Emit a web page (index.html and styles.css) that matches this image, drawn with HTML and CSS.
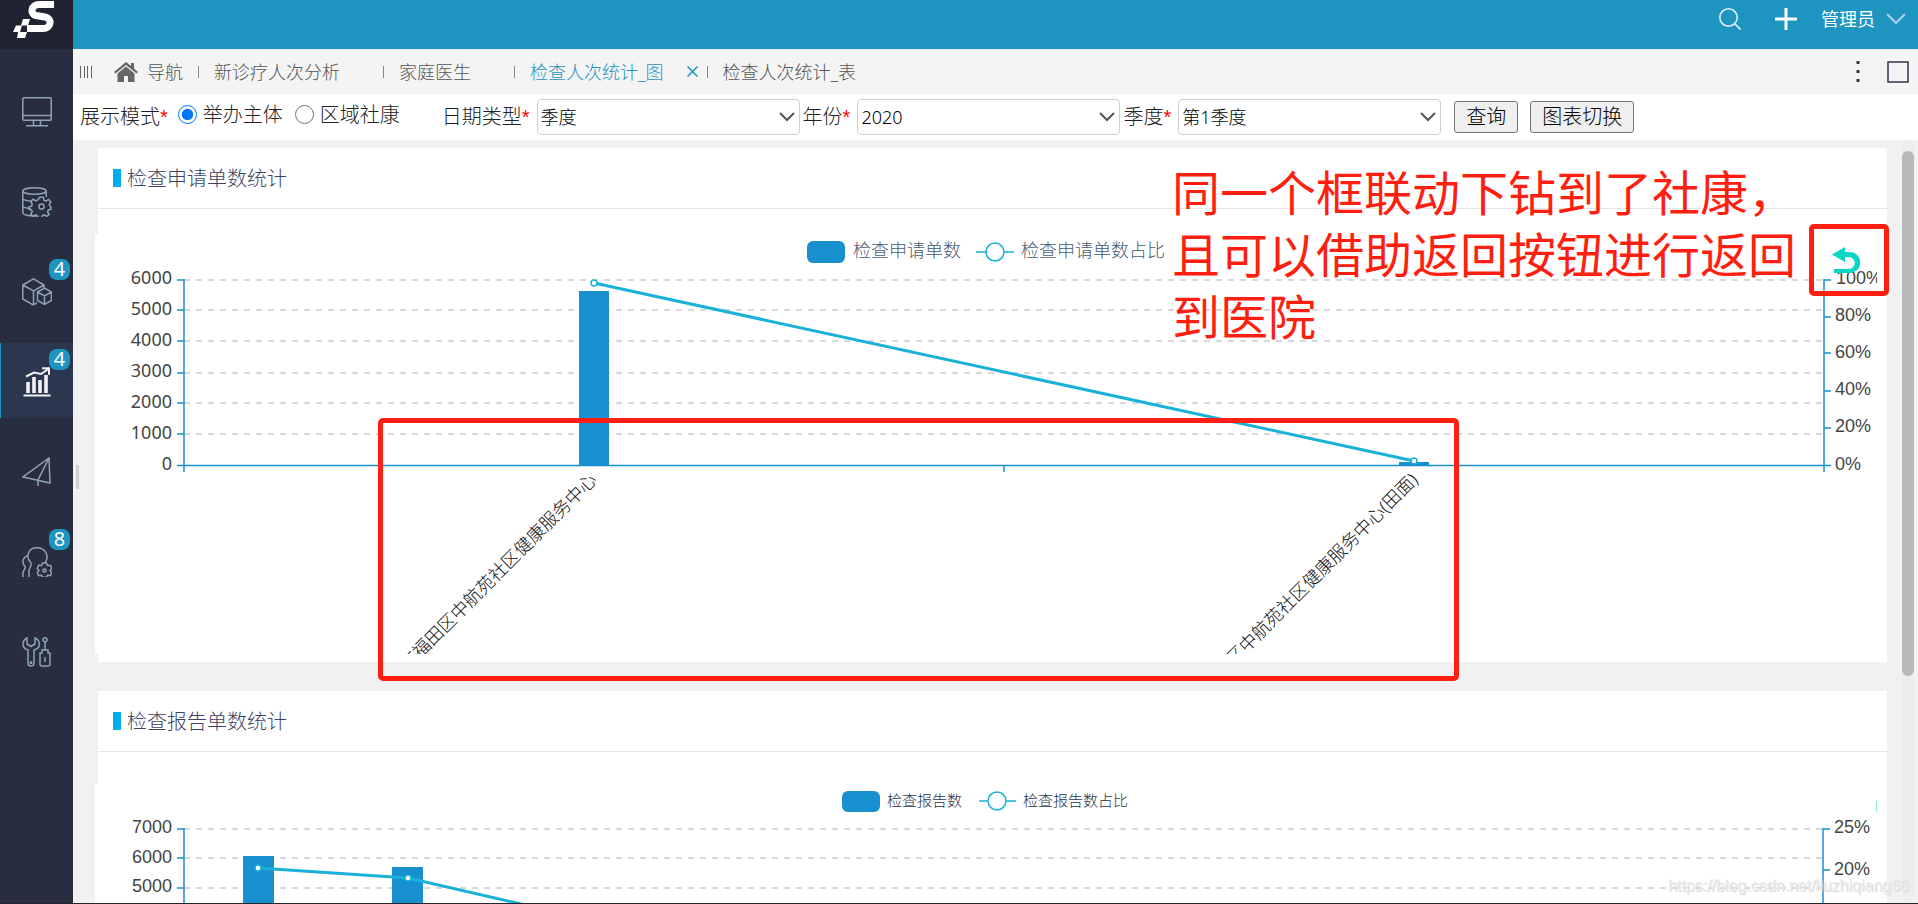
FILE: index.html
```html
<!DOCTYPE html>
<html lang="zh-CN">
<head>
<meta charset="utf-8">
<title>检查人次统计_图</title>
<link rel="stylesheet" href="styles.css">
</head>
<body>
<div class="app">
  <aside class="sidebar">
    <a class="logo" href="#" aria-label="首页">
      <svg width="73" height="49" viewBox="0 0 73 49">
        <path d="M54 4.500H39C31 4.500 29.500 14 36 15.500L45 17C53 18.500 51 28.500 43 28.500H27" fill="none" stroke="#fff" stroke-width="7"/>
        <path d="M23 19h7l-2 6.500h-7zM16 25.500h6l-2 6.500h-7zM21 32h6l-2 6h-8l1-6z" fill="#fff"/>
      </svg>
    </a>
    <nav class="menu">
      <a class="menu-item" href="#" aria-label="工作台">
        <svg class="menu-icon" viewBox="0 0 30 30"><rect x=".8" y=".8" width="28.400" height="22.400" rx="1"/><path d="M1 18.500h28M11.500 23.500v5M18.500 23.500v5M4 28.700h22"/></svg>
      </a>
      <a class="menu-item" href="#" aria-label="数据管理">
        <svg class="menu-icon" viewBox="0 0 30 30"><ellipse cx="12.500" cy="4" rx="11.700" ry="3.200"/><path d="M.8 4v21.500c0 2 5 3.500 14 3.500M24.200 4v6M.8 12c2 1.500 5 2 9 2.300M.8 19.500c2 1.500 4.500 1.800 8 2"/><path d="M17.900 10.200h3.400l.6 3 2 .9 2.600-1.700 2.300 2.400-1.600 2.500.8 2 .9.600v2.400l-2.500.6-.9 2 1.600 2.500-2.300 2-2.600-1.500-2 .8-.6 2h-3.400l-.6-2-2-.8-2.500 1.500-2.400-2.300 1.600-2.500-.8-1.700-2.400-.6v-2.400l2.400-.8.8-2-1.600-2.500 2.400-2.400 2.500 1.600 2-.8z"/><circle cx="19.500" cy="19.500" r="2.600"/></svg>
      </a>
      <a class="menu-item" href="#" aria-label="物资管理">
        <svg class="menu-icon" viewBox="0 0 30 30"><path d="M15 26l-4 2L.8 22V8L11.500 1.800 22 8v3M.8 8l10.700 6L22 8M11.500 14v14M15.500 15l7-4 7 4v8.500l-7 4-7-4zM15.500 15l7 4 7-4M22.500 19v8.500"/></svg>
        <span class="badge">4</span>
      </a>
      <a class="menu-item active" href="#" aria-label="统计分析">
        <svg class="menu-icon" viewBox="0 0 30 30"><path d="M1.500 28.500h27" stroke-width="2"/><path d="M6 15v11M12 10v16M18 13v13M24 8v18" stroke-width="3.600"/><path d="M4 9.500l8-4 7 1.500 8-5.500M20 1.200h7v6.500" stroke-width="2"/></svg>
        <span class="badge">4</span>
      </a>
      <a class="menu-item" href="#" aria-label="消息发送">
        <svg class="menu-icon" viewBox="0 0 30 30"><path d="M27 1L1 20l27 6zM27 1L16 23v6"/></svg>
      </a>
      <a class="menu-item" href="#" aria-label="人员管理">
        <svg class="menu-icon" viewBox="0 0 30 30"><path d="M7 30v-6c0-3 3-5 2-8-6-6-3-15.200 6-15.200s12.500 9 8 15M6 8.500c-6 2-6 8-3 11 1 2-2 4-2 6.500v4"/><path d="M20.500 16h4l1 2.500 3-.3 1.200 3.300-1.700 2 1.700 2-1.200 3-3-.3-1 2h-4l-1-2-3 .3-1.200-3 1.700-2-1.700-2 1.200-3.300 3 .3z"/><circle cx="22.500" cy="23.500" r="1.600"/></svg>
        <span class="badge">8</span>
      </a>
      <a class="menu-item" href="#" aria-label="系统工具">
        <svg class="menu-icon" viewBox="0 0 30 30"><path d="M5 1C-.5 4-.5 11 6 13v13c0 4 6 4 6 0V13c7-2 7-9 1-12v6L9 9.500 5 7z"/><circle cx="9" cy="25.500" r=".8"/><circle cx="23" cy="2.800" r="2"/><path d="M23 5v8M20 13h6v3h2v11q0 2-2 2h-6q-2 0-2-2V16h2zM23 20v5"/></svg>
      </a>
    </nav>
  </aside>

  <div class="main">
    <header class="topbar">
      <button class="icon-btn" aria-label="搜索"><svg width="22" height="22" viewBox="0 0 22 22" fill="none" stroke="#e4f3f9" stroke-width="1.600"><circle cx="9.500" cy="9.500" r="8.700"/><path d="M15.500 15.500l6 6"/></svg></button>
      <button class="icon-btn" aria-label="新增"><svg width="22" height="22" viewBox="0 0 22 22" stroke="#fff" stroke-width="3"><path d="M11 0v22M0 11h22"/></svg></button>
      <button class="user">管理员<svg width="20" height="12" viewBox="0 0 20 12" fill="none" stroke="#a5d2e5" stroke-width="2"><path d="M1 1l9 9 9-9"/></svg></button>
    </header>

    <nav class="tabs">
      <svg class="grip" width="12" height="12" viewBox="0 0 12 12" fill="#666"><path d="M0 0h1v12H0zM4 0h1v12H4zM7 0h1v12H7zM11 0h1v12h-1z"/></svg>
      <a class="tab home" href="#"><svg width="24" height="20" viewBox="0 0 24 20" fill="#666"><path d="M12 0L0 10l1.500 1.500L12 3l10.500 8.500L24 10l-4-3.500V1h-3v3z"/><path d="M12 4.500L3.500 11.500V20H10v-6h4v6h6.500v-8.500z"/></svg>导航</a>
      <a class="tab wide" href="#">新诊疗人次分析</a>
      <a class="tab wide" href="#">家庭医生</a>
      <a class="tab current" href="#">检查人次统计_图<svg class="close" width="11" height="11" viewBox="0 0 11 11" stroke="#1e94c1" stroke-width="1.500"><path d="M.5.500l10 10M10.500.500l-10 10"/></svg></a>
      <a class="tab" href="#">检查人次统计_表</a>
      <div class="tab-tools">
        <button class="icon-btn" aria-label="更多"><svg width="4" height="22" viewBox="0 0 4 22" fill="#33334d"><path d="M.5 0h3v3h-3zM.5 9h3v3h-3zM.5 18h3v3h-3z"/></svg></button>
        <button class="icon-btn" aria-label="全屏"><svg width="22" height="22" viewBox="0 0 22 22" fill="none" stroke="#33334d" stroke-width="1.500"><path d="M1 1h20v20H1z"/></svg></button>
      </div>
    </nav>

    <form class="filters">
      <span class="field-label">展示模式<i>*</i></span>
      <label class="radio"><input type="radio" name="mode" checked>举办主体</label>
      <label class="radio"><input type="radio" name="mode">区域社康</label>
      <label class="field-label first" for="dtype">日期类型<i>*</i></label>
      <span class="select"><select id="dtype"><option>季度</option></select><svg width="16" height="10" viewBox="0 0 16 10"><path d="M1 1l7 7 7-7"/></svg></span>
      <label class="field-label" for="year">年份<i>*</i></label>
      <span class="select"><select id="year"><option>2020</option></select><svg width="16" height="10" viewBox="0 0 16 10"><path d="M1 1l7 7 7-7"/></svg></span>
      <label class="field-label" for="quarter">季度<i>*</i></label>
      <span class="select"><select id="quarter"><option>第1季度</option></select><svg width="16" height="10" viewBox="0 0 16 10"><path d="M1 1l7 7 7-7"/></svg></span>
      <button class="btn" type="button">查询</button>
      <button class="btn" type="button">图表切换</button>
    </form>

    <div class="content">
      <div class="splitter"></div>
      <div class="panels">
        <section class="panel">
          <h2 class="panel-title">检查申请单数统计</h2>
          <div class="chart-box">
            <svg class="chart" viewBox="0 0 1782 420">
              <rect class="bar" x="712" y="7" width="38" height="22" rx="6"/>
              <text class="legend" x="758" y="23">检查申请单数</text>
              <path class="legend-line" d="M881 18h38"/><circle class="legend-dot" cx="900" cy="18" r="9"/>
              <text class="legend" x="926" y="23">检查申请单数占比</text>
              <path class="grid" d="M89 46H1728M89 76H1728M89 107H1728M89 139H1728M89 169H1728M89 200H1728"/>
              <path class="axis" d="M89 45V238M82 46h7M82 76h7M82 107h7M82 139h7M82 169h7M82 200h7M82 231.500H1736M909 231v7M1729 45V238M1729 46h7M1729 83h7M1729 119h7M1729 157h7M1729 194h7"/>
              <g class="ylabel">
                <text x="77" y="50">6000</text><text x="77" y="81">5000</text><text x="77" y="112">4000</text><text x="77" y="143">3000</text><text x="77" y="174">2000</text><text x="77" y="205">1000</text><text x="77" y="236">0</text>
              </g>
              <g class="rlabel">
                <text x="1741" y="50">100%</text><text x="1740" y="87">80%</text><text x="1740" y="124">60%</text><text x="1740" y="161">40%</text><text x="1740" y="198">20%</text><text x="1740" y="236">0%</text>
              </g>
              <rect class="bar" x="484" y="57" width="30" height="174"/>
              <rect class="bar" x="1304" y="228" width="30" height="4"/>
              <path class="line" d="M499 49L1319 227"/>
              <circle class="dot" cx="499" cy="49" r="3"/><circle class="dot" cx="1319" cy="227" r="3"/>
              <text class="xlabel" transform="translate(498 242) rotate(-45)">深圳市福田区中航苑社区健康服务中心</text>
              <text class="xlabel" transform="translate(1319 242) rotate(-45)">深圳市福田区中航苑社区健康服务中心(田面)</text>
              <path d="M1737 20.500l13-7.500v5h4c15 0 15 21 0 21h-15v-4h14c9 0 9-12 0-12h-3v5z" fill="#08d6c4"/>
            </svg>
          </div>
        </section>
        <section class="panel">
          <h2 class="panel-title">检查报告单数统计</h2>
          <div class="chart-box lower">
            <svg class="chart" viewBox="0 0 1782 420">
              <rect class="bar" x="747" y="7" width="38" height="21" rx="6"/>
              <text class="legend small" x="792" y="22">检查报告数</text>
              <path class="legend-line" d="M884 17h37"/><circle class="legend-dot" cx="902" cy="17" r="9"/>
              <text class="legend small" x="928" y="22">检查报告数占比</text>
              <path class="grid" d="M89 45H1728M89 74H1728M89 104H1728M89 134H1728"/>
              <path class="axis" d="M89 44V260M82 45h7M82 74h7M82 104h7M82 134h7M1728 44V260M1728 45h7M1728 86h7M1728 127h7"/>
              <g class="ylabel alt">
                <text x="77" y="49">7000</text><text x="77" y="79">6000</text><text x="77" y="108">5000</text>
              </g>
              <g class="rlabel">
                <text x="1739" y="49">25%</text><text x="1739" y="91">20%</text>
              </g>
              <rect class="bar" x="148" y="72" width="31" height="188"/>
              <rect class="bar" x="297" y="83" width="31" height="177"/>
              <path class="line" d="M163 84L313 94L461 128"/>
              <circle class="dot" cx="163" cy="84" r="3"/><circle class="dot" cx="313" cy="94" r="3"/>
              <path d="M1781.500 17v11" stroke="#8aeadf"/>
            </svg>
          </div>
        </section>
      </div>
      <div class="scroll-track"><div class="scroll-thumb"></div></div>
      <p class="note">同一个框联动下钻到了社康，<br>且可以借助返回按钮进行返回<br>到医院</p>
      <div class="mark mark-back"></div>
      <div class="mark mark-axis"></div>
      <span class="watermark">https://blog.csdn.net/liuzhiqiang66</span>
    </div>
  </div>
</div>
</body>
</html>
```
FILE: styles.css
```css
* { box-sizing: border-box; }

body {
  margin: 0;
  font-family: "Noto Sans", "Noto Sans CJK SC", sans-serif;
  font-size: 18px;
  font-weight: 300;
  color: #222;
}

a { color: inherit; text-decoration: none; }

button, select { font: inherit; }

.app {
  display: flex;
  height: 100vh;
  overflow: hidden;
  border-bottom: 1px solid #25262c;
}

/* sidebar */
.sidebar { flex: none; width: 73px; background: #282d40; }
.logo { display: block; height: 49px; background: #202331; }
.logo svg { display: block; }
.menu { display: flex; flex-direction: column; gap: 15px; padding-top: 24px; }
.menu-item {
  position: relative;
  display: flex;
  justify-content: center;
  align-items: center;
  height: 75px;
  padding-top: 3px;
  border-left: 1px solid transparent;
}
.menu-item.active { background: #2a374f; border-left-color: #1e94c1; }
.menu-icon { width: 30px; height: 30px; fill: none; stroke: #8fa3b8; stroke-width: 1.5; }
.active .menu-icon { stroke: #f2f2f2; }
.badge {
  position: absolute;
  top: 6px;
  right: 3px;
  width: 21px;
  height: 21px;
  border-radius: 8px;
  background: #1e94c1;
  color: #fff;
  font-size: 20px;
  font-weight: 400;
  line-height: 20px;
  text-align: center;
}

/* top bar */
.main { flex: 1; min-width: 0; display: flex; flex-direction: column; }
.topbar {
  flex: none;
  display: flex;
  justify-content: flex-end;
  align-items: flex-start;
  gap: 34px;
  height: 49px;
  padding: 8px 12px 0 0;
  background: #1e94c1;
}
.icon-btn { display: block; padding: 0; border: 0; background: none; }
.icon-btn svg { display: block; }
.user {
  display: flex;
  align-items: center;
  gap: 11px;
  margin-left: -10px;
  padding: 0;
  border: 0;
  background: none;
  color: #fff;
  font-weight: 400;
  line-height: 22px;
}

/* tabs */
.tabs {
  flex: none;
  display: flex;
  align-items: center;
  height: 45px;
  padding: 0 9px 0 7px;
  background: #f4f4f4;
  color: #555;
  white-space: nowrap;
}
.grip { margin-right: 22px; }
.tab { display: flex; align-items: center; padding-right: 15px; line-height: 24px; }
.tab + .tab::before { content: ""; width: 1px; height: 12px; margin-right: 15px; background: #888; }
.home svg { margin-right: 9px; }
.wide { padding-right: 43px; }
.current { padding-right: 9px; color: #1e94c1; }
.close { margin-left: 23px; }
.tab-tools { display: flex; gap: 27px; margin-left: auto; }

/* filters */
.filters {
  flex: none;
  display: flex;
  align-items: center;
  height: 46px;
  padding-left: 7px;
  background: #fff;
  font-size: 20px;
  line-height: 28px;
  white-space: nowrap;
}
.field-label { padding-right: 7px; }
.field-label i { color: #f00; font-style: normal; font-family: "Liberation Sans", sans-serif; }
.select + .field-label { padding-left: 3px; }
.first { padding-left: 24px; }
.radio { display: flex; align-items: center; padding: 0 18px 5px 0; }
.radio input { width: 19px; height: 19px; margin: 0 6px 0 3px; accent-color: #0075ff; }
.radio + .radio input { margin-left: -6px; }
.select { position: relative; flex: 0 1 263px; }
.select select {
  appearance: none;
  display: block;
  width: 100%;
  height: 36px;
  padding: 0 3px;
  border: 1px solid #d0d0d0;
  border-radius: 4px;
  background: #fff;
  color: #000;
  font-size: 18px;
}
.select svg {
  position: absolute;
  right: 5px;
  top: 13px;
  fill: none;
  stroke: #555;
  stroke-width: 2;
  pointer-events: none;
}
.btn {
  height: 32px;
  margin-left: 12px;
  padding: 0 11px;
  border: 1px solid #767676;
  border-radius: 3px;
  background: #efefef;
  color: #000;
  line-height: 28px;
}
.select + .btn { margin-left: 13px; }

/* content */
.content {
  position: relative;
  flex: 1;
  min-height: 0;
  display: flex;
  overflow: hidden;
  background: #f1f1f1;
}
.splitter { flex: none; width: 3px; height: 24px; margin: 325px 16px 0 3px; background: #d0d0d0; }
.panels { flex: 1; min-width: 0; display: flex; flex-direction: column; gap: 29px; padding: 8px 15px 0 3px; }
.panel { flex: none; background: #fff; padding-bottom: 8px; }
.panel-title {
  display: flex;
  align-items: center;
  gap: 6px;
  height: 61px;
  margin: 0;
  padding: 0 0 1px 15px;
  border-bottom: 1px solid #e6e6e6;
  color: #3c4460;
  font-size: 20px;
  font-weight: 300;
}
.panel-title::before { content: ""; width: 8px; height: 18px; background: #00aeef; }
.chart-box { margin: 25px 10px 0 -3px; background: #fff; }
.chart-box.lower { margin-top: 32px; }
.chart { display: block; width: 100%; height: auto; overflow: hidden; }

.bar { fill: #1890d0; }
.grid { stroke: #ccc; stroke-width: 1.5; stroke-dasharray: 6 6; }
.axis { fill: none; stroke: #1890d0; stroke-width: 1.5; }
.line { fill: none; stroke: #19b1d8; stroke-width: 3; }
.dot { fill: #fff; stroke: #19b1d8; stroke-width: 1.5; }
.legend-line { stroke: #19b1d8; stroke-width: 1.5; }
.legend-dot { fill: #fff; stroke: #19b1d8; stroke-width: 1.5; }
.legend { fill: #4a5b70; font-size: 18px; }
.legend.small { fill: #28324a; font-size: 15px; }
.ylabel { text-anchor: end; font-size: 18px; font-weight: 400; fill: #444; }
.ylabel.alt, .rlabel { font-family: "Liberation Sans", sans-serif; font-size: 18px; fill: #444; }
.xlabel { text-anchor: end; dominant-baseline: central; font-size: 18px; fill: #111; }

.scroll-track { flex: none; width: 12px; margin-right: 4px; padding-top: 11px; border-radius: 6px; background: #ededed; }
.scroll-thumb { height: 525px; border-radius: 6px; background: #b9b9b9; }

/* annotations over the charts */
.note {
  position: absolute;
  top: 22px;
  right: 122px;
  margin: 0;
  color: #ff1e10;
  font-size: 48px;
  font-weight: 400;
  line-height: 62px;
  white-space: nowrap;
}
.mark { position: absolute; border: 5px solid #ff1e10; border-radius: 5px; }
.mark-back { top: 84px; right: 29px; width: 80px; height: 72px; }
.mark-axis { top: 278px; left: 305px; right: 459px; height: 263px; }
.watermark {
  position: absolute;
  right: 9px;
  bottom: 6px;
  color: #ececec;
  font: 16px/22px "Liberation Sans", sans-serif;
  text-shadow: 1px 1px 1px #d6d6d6;
}
```
